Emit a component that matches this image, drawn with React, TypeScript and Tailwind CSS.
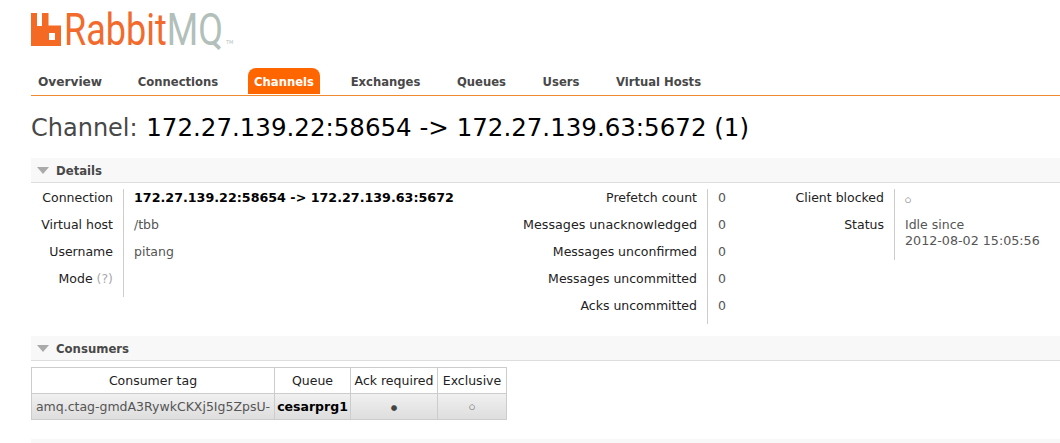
import type { ReactNode } from "react";

const tabs = [
  { label: "Overview", width: "w-[76px] text-[12.2px]" },
  { label: "Connections", width: "w-[92px]" },
  { label: "Channels", width: "w-[72px]" },
  { label: "Exchanges", width: "w-[83px]" },
  { label: "Queues", width: "w-[61px]" },
  { label: "Users", width: "w-[50px]" },
  { label: "Virtual Hosts", width: "w-[97px]" },
];

function SectionHeader({ title }: { title: string }) {
  return (
    <div className="flex h-[25px] items-center border-b border-[#dddddd] bg-[#f8f8f8] pl-[6px] text-[11.7px] font-bold text-[#484848]">
      <svg width="12" height="7" viewBox="0 0 12 7" className="mr-[7px]" aria-hidden="true">
        <polygon points="0,0 12,0 6,7" fill="#aaaaaa" />
      </svg>
      <span className="pt-[3px]">{title}</span>
    </div>
  );
}

function InfoTable({ rows, cols }: { rows: [ReactNode, ReactNode, string?][]; cols: string }) {
  return (
    <div className={`grid h-fit ${cols}`}>
      {rows.map((r, i) => (
        <div key={i} className="contents">
          <div className={`${r[2] ?? "h-[27px]"} whitespace-nowrap pr-[10px] pt-[1px] text-right leading-[15px] text-[#222222]`}>
            {r[0]}
          </div>
          <div className={`${r[2] ?? "h-[27px]"} whitespace-nowrap border-l border-[#cccccc] pl-[10px] pt-[1px] leading-[15px] text-[#555555]`}>
            {r[1]}
          </div>
        </div>
      ))}
    </div>
  );
}

export default function App() {
  return (
    <div className="h-[443px] w-[1060px] overflow-hidden bg-white pl-[31px] font-['DejaVu_Sans',sans-serif] text-[12.5px]">
      <div className="flex h-[68px] items-start pt-[13px]">
        <svg width="30" height="33" viewBox="0 0 30 33" aria-hidden="true">
          <path fill="#f46a25" fillRule="evenodd" d="M0 0h6v13h5V0h6.500v12.500H30V33H0zM18 20v7h6v-7z" />
        </svg>
        <span className="ml-[3px] mt-[-5px] w-[160px] origin-left scale-x-[0.8] whitespace-nowrap font-['Roboto',sans-serif] text-[45px] font-normal leading-[44px] text-[#f26a2c]">
          Rabbit<span className="text-[#b2bfba]">MQ</span>
        </span>
        <span className="ml-[2px] mt-[26px] text-[5px] text-[#b2bfba]">TM</span>
      </div>

      <div className="flex h-[28px] gap-[24px] border-b border-[#f08a30] pl-[1px] text-[11.6px] font-bold">
        {tabs.map((t) =>
          t.label === "Channels" ? (
            <div key={t.label} className={`${t.width} flex h-[26px] items-center justify-center rounded-t-[8px] bg-[#ff6600] pt-[3px] text-white`}>
              {t.label}
            </div>
          ) : (
            <div key={t.label} className={`${t.width} flex h-[26px] items-center justify-center pt-[3px] text-[#484848]`}>
              {t.label}
            </div>
          ),
        )}
      </div>

      <h1 className="mt-[17px] h-[45px] whitespace-nowrap text-[24px] font-normal leading-[30px] text-[#484848]">
        Channel: <span className="ml-[1px] text-[24.5px] text-black">172.27.139.22:58654 -&gt; 172.27.139.63:5672 (1)</span>
      </h1>

      <SectionHeader title="Details" />
      <div className="flex h-[153px] pt-[6px]">
        <div className="w-[480px] shrink-0">
          <InfoTable
            cols="grid-cols-[92px_auto]"
            rows={[
              ["Connection", <b className="text-[12.7px] text-black">172.27.139.22:58654 -&gt; 172.27.139.63:5672</b>],
              ["Virtual host", "/tbb"],
              ["Username", "pitang"],
              [<>Mode <span className="text-[#aaaaaa]">(?)</span></>, ""],
            ]}
          />
        </div>
        <div className="w-[280px] shrink-0">
          <InfoTable
            cols="grid-cols-[196px_auto]"
            rows={[
              ["Prefetch count", "0"],
              [<span className="text-[12.7px]">Messages unacknowledged</span>, "0"],
              ["Messages unconfirmed", "0"],
              ["Messages uncommitted", "0"],
              ["Acks uncommitted", "0"],
            ]}
          />
        </div>
        <InfoTable
          cols="grid-cols-[103px_auto]"
          rows={[
            ["Client blocked", <span className="text-[7px] text-[#333333]">○</span>],
            ["Status", <>Idle since<br /><span className="text-[12.7px] leading-[17px]">2012-08-02 15:05:56</span></>, "h-[44px]"],
          ]}
        />
      </div>

      <SectionHeader title="Consumers" />
      <table className="mt-[6px] w-[475px] table-fixed border-collapse border border-[#cccccc] text-center text-[#222222]">
        <thead>
          <tr className="h-[26px]">
            <th className="w-[243px] border border-[#cccccc] pt-[2px] font-normal">Consumer tag</th>
            <th className="w-[76px] border border-[#cccccc] pt-[2px] font-normal">Queue</th>
            <th className="w-[87px] border border-[#cccccc] pt-[2px] font-normal">Ack required</th>
            <th className="w-[69px] border border-[#cccccc] pt-[2px] font-normal">Exclusive</th>
          </tr>
        </thead>
        <tbody>
          <tr className="h-[26px] bg-gradient-to-b from-[#f0f0f0] to-[#dddddd]">
            <td className="whitespace-nowrap border border-[#cccccc] pt-[2px] text-[#555555]">amq.ctag-gmdA3RywkCKXj5Ig5ZpsU-</td>
            <td className="border border-[#cccccc] pt-[2px] font-bold text-black">cesarprg1</td>
            <td className="border border-[#cccccc] pt-[2px] text-[7.5px] text-[#444444]">●</td>
            <td className="border border-[#cccccc] pt-[2px] text-[7px] text-[#333333]">○</td>
          </tr>
        </tbody>
      </table>
      <div className="mt-[19px] h-[8px] bg-[#f8f8f8]" />
    </div>
  );
}
